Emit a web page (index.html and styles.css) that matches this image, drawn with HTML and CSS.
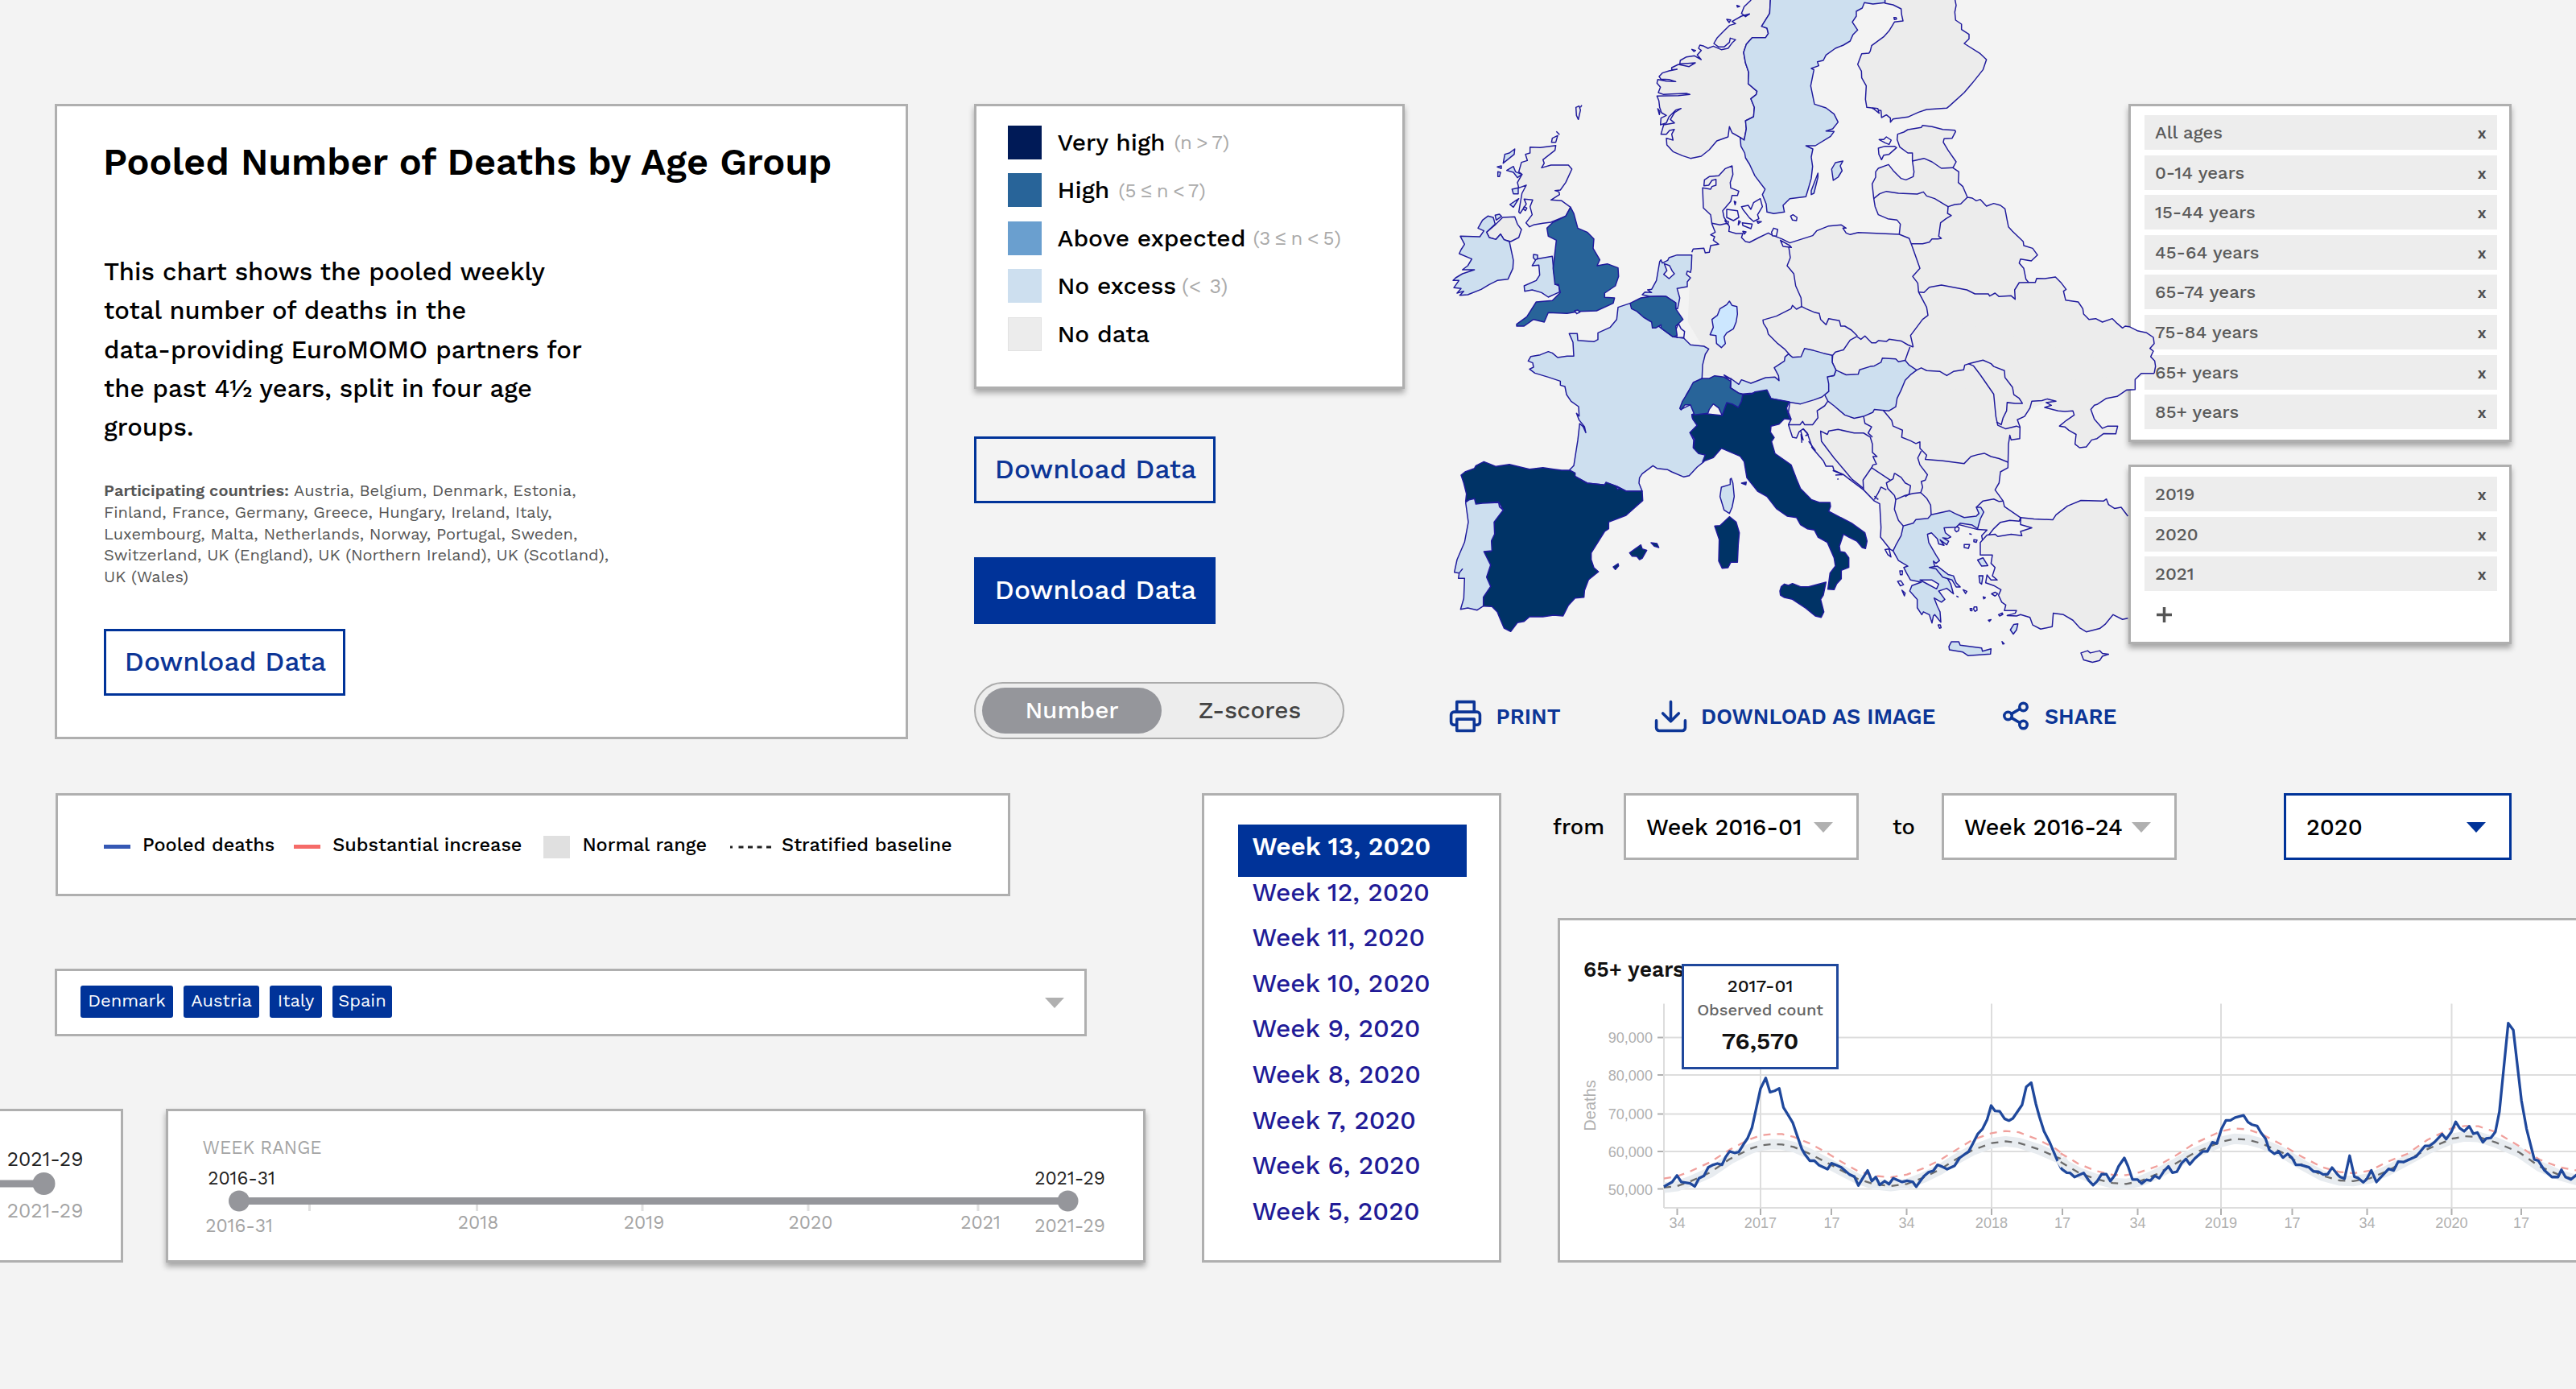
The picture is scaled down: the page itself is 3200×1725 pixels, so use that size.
FILE: index.html
```html
<!DOCTYPE html>
<html lang="en">
<head>
<meta charset="utf-8">
<title>EuroMOMO components</title>
<link rel="stylesheet" href="styles.css">
</head>
<body>
<main class="board">
  <div class="row row-top">
    <section class="card intro">
      <h1>Pooled Number of Deaths by Age Group</h1>
      <p class="lead">This chart shows the pooled weekly<br>total number of deaths in the<br>data-providing EuroMOMO partners for<br>the past 4½ years, split in four age<br>groups.</p>
      <p class="countries"><b>Participating countries:</b> Austria, Belgium, Denmark, Estonia,<br>Finland, France, Germany, Greece, Hungary, Ireland, Italy,<br>Luxembourg, Malta, Netherlands, Norway, Portugal, Sweden,<br>Switzerland, UK (England), UK (Northern Ireland), UK (Scotland),<br>UK (Wales)</p>
      <button class="btn">Download Data</button>
    </section>

    <section class="controls">
      <ul class="card raised levels">
        <li><i class="sw very-high"></i>Very high<small>(n &gt; 7)</small></li>
        <li><i class="sw high"></i>High<small>(5 ≤ n &lt; 7)</small></li>
        <li><i class="sw above"></i>Above expected<small class="tight">(3 ≤ n &lt; 5)</small></li>
        <li><i class="sw none"></i>No excess<small class="wide">(&lt; 3)</small></li>
        <li><i class="sw nodata"></i>No data</li>
      </ul>
      <button class="btn btn-a">Download Data</button>
      <button class="btn btn-b filled">Download Data</button>
      <div class="toggle"><span class="on">Number</span><span>Z-scores</span></div>
    </section>

    <section class="map-col">
      <svg class="map" viewBox="0 0 3000 2550" width="1000" height="850">
        <!-- inland filler -->
        <path class="nostroke" d="M965 945L1180 905 1300 900 1330 912 1740 876 2000 745 2100 850 2220 1060 2690 1370 2580 1440 2400 1450 2140 1560 2100 1700 2000 1850 1700 1900 1450 1600 1325 1550 1330 1500 1080 1405 1005 1400 1010 1300 950 1200 960 1000Z"/>
        <!-- Norway, Finland, Sweden -->
        <path d="M1186 0L1160 25 1150 50 1165 62 1180 52 1150 60 1115 80 1128 88 1105 95 1085 115 1060 140 1047 162 1065 175 1085 175 1105 158 1108 142 1128 148 1115 160 1100 180 1075 185 1045 172 1025 180 1010 172 995 168 990 180 1000 188 985 205 1000 222 975 208 945 212 922 225 920 238 950 236 978 234 955 248 915 240 890 252 890 260 910 258 880 264 855 272 843 285 850 295 880 296 905 304 870 302 838 296 835 310 848 325 840 345 860 352 890 350 945 348 958 352 915 356 870 357 835 358 842 375 845 400 852 420 870 430 850 440 848 465 870 458 880 435 905 410 925 404 900 420 885 445 900 458 860 465 850 500 870 500 882 486 900 482 890 500 895 522 870 515 872 540 895 565 930 580 960 590 1000 582 1030 558 1058 525 1100 510 1105 472 1115 495 1145 512 1160 522 1168 480 1165 450 1195 435 1198 400 1185 368 1205 352 1208 340 1175 312 1177 270 1165 235 1158 195 1168 165 1190 140 1240 140 1250 125 1245 105 1225 98 1255 50 1258 0"/>
        <path class="low" d="M1258 -5L1255 50 1225 98 1245 105 1250 125 1240 140 1190 140 1168 165 1158 195 1165 235 1177 270 1175 312 1208 340 1205 352 1185 368 1198 400 1195 435 1165 450 1168 480 1160 522 1145 512 1148 545 1162 570 1165 588 1180 612 1200 655 1238 705 1228 725 1242 760 1245 790 1270 796 1310 790 1305 765 1330 740 1390 733 1400 700 1410 665 1415 620 1410 585 1416 555 1390 543 1425 543 1482 508 1495 490 1465 488 1490 480 1510 455 1495 425 1465 402 1422 388 1408 320 1420 260 1410 255 1438 245 1433 230 1455 225 1465 205 1500 180 1530 168 1555 153 1565 130 1583 112 1563 82 1578 60 1578 42 1600 30 1608 10 1640 15 1685 10 1685 -5Z"/>
        <g transform="translate(1260 0)">
          <path d="M425 -5V12L455 18 485 33 487 55 492 78 460 82 440 115 420 137 375 170 370 190 365 198 338 200 323 240 337 265 338 290 355 320 352 370 357 400 375 402 395 410 410 412 412 438 430 428 445 440 445 455 455 443 510 436 550 418 580 408 655 403 665 395 720 345 750 310 790 260 803 222 780 200 720 162 738 145 738 128 710 110 710 90 688 75 685 45 690 20 685 -5"/>
          <path class="low" d="M232 672L226 630 240 606 268 600 258 618 265 636 250 660 238 668ZM175 645L150 710 150 725 160 720 175 660Z"/>
          <path class="water" d="M73 805L82 800 97 810 95 822 80 820ZM403 520L420 520 430 510 448 522 440 538 425 532ZM400 552L425 545 460 545 468 550 440 575 420 578 412 595 402 575ZM378 402l25 20-5-18zM458 65l8 0 2 6-8 2z"/>
        </g>
        <!-- northern mainland -->
        <path d="M965 940L970 928 1010 925 1015 942 1030 940 1035 915 1065 910 1045 895 1050 882 1035 875 1052 865 1040 835 1035 800 1008 775 1005 700 1035 705 1040 695 1055 690 1055 668 1040 672 1028 690 1010 692 1012 670 1030 658 1065 655 1090 628 1115 618 1118 650 1108 680 1110 700 1140 712 1135 728 1115 728 1110 750 1080 785 1085 810 1098 830 1105 845 1103 862 1130 870 1155 870 1150 885 1165 900 1180 903 1215 885 1250 868 1262 875 1300 890 1330 905 1415 878 1430 860 1475 842 1522 838 1540 850 1528 850 1540 868 1555 874 1585 866 1738 873 1742 835 1730 820 1695 815 1660 800 1648 770 1643 740 1637 685 1650 660 1650 640 1660 627 1698 613 1715 635 1745 665 1763 670 1790 658 1793 640 1787 600 1787 570 1770 570 1740 548 1730 520 1732 500 1755 492 1770 483 1820 475 1825 467 1860 472 1900 482 1945 485 1948 490 1935 515 1905 517 1902 530 1920 560 1950 603 1938 625 1960 640 1958 680 1975 695 1992 735 2010 738 2025 748 2040 743 2063 768 2090 758 2115 765 2132 778 2140 820 2145 845 2160 862 2200 900 2202 915 2235 925 2253 950 2230 972 2190 965 2185 980 2202 1000 2210 1040 2220 1052 2245 1052 2250 1037 2280 1038 2320 1032 2340 1052 2360 1078 2350 1085 2358 1118 2405 1125 2422 1150 2425 1170 2445 1190 2470 1187 2495 1200 2532 1187 2550 1205 2570 1222 2580 1215 2595 1217 2625 1232 2660 1240 2685 1257 2688 1280 2672 1298 2685 1308 2675 1329 2690 1345 2693 1365 2688 1391"/>
        <!-- southern mainland, Turkey, Cyprus -->
        <g transform="translate(1260 1200) scale(1 1.0332)">
          <path d="M1428 185L1380 185 1357 207 1357 243 1325 245 1290 268 1250 275 1215 297 1205 300 1192 315 1205 350 1235 383 1255 375 1292 375 1285 403 1240 402 1215 420 1195 425 1175 450 1150 453 1133 440 1137 405 1110 390 1095 378 1075 375 1100 355 1130 335 1125 320 1095 322 1070 320 1020 308 1045 300 1025 290 1062 285 1030 277 1010 283 972 285 965 310 945 340 918 352 928 378 927 420 895 425 890 408 885 440 883 525 855 540 850 580 835 605 865 645 870 665 930 705 925 718 890 715 855 722 830 745 790 795 785 770 805 750 770 748 640 715 500 750 455 825 445 820 408 775 410 740 405 655 385 645 345 605 290 565 270 550 235 535 230 520 205 520 195 500 155 455 135 400 120 385 105 395 95 418 80 415 65 370 75 350 65 325 70 290"/>
          <path d="M1330 700L1305 668 1280 672 1258 658 1250 638 1240 645 1155 643 1105 663 1062 695 1050 713 980 710 930 705 930 730 972 742 930 755 935 770 895 765 845 773 835 765 805 768 780 795 780 840 825 840 820 870 835 885 825 915 843 930 820 930 805 912 800 940 830 950 857 965 848 985 860 1010 875 1020 870 1040 915 1040 910 1050 880 1058 915 1060 930 1055 965 1065 975 1092 1005 1107 1048 1098 1052 1050 1090 1055 1125 1075 1150 1102 1175 1117 1225 1105 1245 1090 1275 1055 1310 1072 1330 1068"/>
          <path d="M1155 1193L1180 1185 1190 1193 1225 1185 1235 1195 1258 1198 1235 1205 1225 1220 1198 1227 1165 1218Z"/>
          <g class="line">
            <path d="M320 52L335 62 350 50 375 75 390 75 400 67 430 70 440 62 485 68 510 82 530 90"/>
            <path d="M320 52L295 65 270 100 240 108 230 120 228 145 242 173"/>
            <path d="M518 90L510 110 500 138"/>
            <path d="M543 173L560 165 580 175 630 178 655 193 680 178 718 172 722 155 745 148 790 137 820 150 830 160 870 175 872 200 880 210 900 235 905 262 925 275 937 293 910 293 880 290 878 320 865 345 858 370 840 360"/>
            <path d="M735 150L755 158 780 190 830 260 838 340 845 372 875 385 915 375 928 380"/>
            <path d="M418 318L450 355 455 375 490 390 487 415 520 428 540 438 555 432 555 455 580 480 575 495 640 500 720 510 745 485 770 478 795 473 820 485 850 492 883 505"/>
            <path d="M560 465L547 490 555 515 583 550 575 570 560 575 565 595 558 615"/>
            <path d="M558 615L580 635 595 660 597 697"/>
            <path d="M558 615L530 618 500 625 465 640 460 675 475 715 493 735"/>
            <path d="M460 545L485 560 500 580 520 590 515 620 500 630M460 545L455 565 430 580 435 600 460 625 465 640"/>
            <path d="M385 640L400 615 410 595 430 605M345 605L343 570 375 525 445 570"/>
            <path d="M375 525L380 515 393 512 380 485 395 485 378 470 378 440 370 415 345 400 310 400 250 387 215 393 210 405 185 393 188 430 235 490 270 530 300 565 345 600"/>
            <path d="M345 340L350 365 375 378 362 400 378 415"/>
            <path d="M212 285L200 302 172 320 175 345 155 370 125 370 118 358 108 370 65 370"/>
            <path d="M765 668L790 645 830 638 850 647 865 645"/>
            <path d="M110 390L120 425 112 405 115 435M120 385L138 405 128 410M140 430L165 462 150 450M230 535L268 550 240 552M247 567L252 565M385 628l15 12M930 703v15"/>
          </g>
          <path class="low" d="M242 173L280 190 325 188 330 172 370 160 385 158 410 145 415 130 465 133 475 143 500 138 515 155 543 173 520 190 500 210 485 245 470 275 465 305 440 320 415 318 385 315 380 325 345 340 310 347 275 335 235 302 212 285 200 262 215 250 210 225 210 197 235 193Z"/>
          <path class="low" d="M455 825L465 805 485 770 493 735 530 725 540 712 585 708 597 695 665 680 685 690 720 705 765 700 775 690 765 668 782 668 793 685 780 710 770 745 750 732 705 725 690 740 645 742 650 760 670 775 660 780 640 778 662 790 655 803 630 785 645 805 625 800 620 782 598 760 583 765 588 795 615 840 628 860 615 870 605 862 610 880 655 920 670 945 680 980 655 960 640 965 625 970 648 1000 635 1010 608 995 620 1025 630 1045 633 1082 610 1055 605 1060 600 1085 590 1055 568 1045 562 1055 545 1030 545 1000 517 970 525 950 560 938 520 930 505 905 495 885 510 880 475 860Z"/>
          <path class="low" d="M590 885L620 880 660 910 680 915 690 940 705 955 690 955 675 930 640 920 615 890ZM663 1170L672 1153 700 1153 705 1165 785 1175 788 1187 820 1178 818 1197 735 1203 715 1190 665 1182ZM892 1110L905 1090 920 1088 915 1110 903 1125ZM770 858L790 850 808 878 785 880ZM775 915L790 915 785 945 778 940Z"/>
          <path class="water" d="M555 930L600 930 625 945 617 962 580 943ZM686 741l8-3 7 5-2 9-8 4-6-6zM720 802l20 0-4 14-16-3zM756 785l12 1-3 8-9-2zM739 763l9 3M822 980L835 974 845 980 835 988ZM791 991l8 3-6 4zM716 965l14 6-5 8zM691 988l8 4M742 1033l7 0 0 8-6-1zM757 1027l10 0 1 12-8 4-5-8zM810 1075l10-2-6 6zM848 1055l14-6 2 5-12 6zM861 1152l8 8-5 1zM623 1092l8 0 3 10-6 2zM480 897l10 0-1 14-7 0zM472 935l12-2 10 14-12 4zM488 967l12 10-3 10zM425 820L440 818 447 847 435 838Z"/>
        </g>
        <g class="line">
          <path d="M1040 832L1070 838 1098 832"/>
          <path d="M1325 912L1332 960 1320 990 1345 1020 1352 1065 1372 1110 1374 1145"/>
          <path d="M1374 1142L1355 1152 1340 1138 1335 1150 1280 1178 1230 1192 1232 1205 1245 1225 1250 1245 1285 1280 1310 1300 1330 1322"/>
          <path d="M1374 1142L1390 1150 1420 1163 1440 1168 1445 1190 1465 1210 1475 1187 1515 1195 1520 1215 1535 1215 1560 1230 1582 1252"/>
          <path d="M1787 600L1830 590 1860 603 1895 627 1938 625"/>
          <path d="M1643 740L1665 722 1690 713 1735 720 1805 723 1828 715 1840 730 1870 740 1920 770 1945 762 1967 760 1992 735"/>
          <path d="M1920 770L1918 795 1932 803 1912 815 1892 830 1885 880 1895 888 1882 890 1860 890 1850 902 1825 908 1783 908"/>
          <path d="M1738 873L1775 888 1785 915 1815 1000 1788 1030 1807 1055 1810 1088 1840 1145 1845 1175 1825 1190 1780 1250 1790 1293"/>
          <path d="M1810 1088L1830 1090 1850 1070 1895 1062 1990 1080 2020 1095 2070 1095 2075 1103 2095 1092 2110 1105 2155 1102 2170 1115 2168 1080 2185 1053 2220 1052"/>
        </g>
        <path class="water" d="M1262 865L1270 850 1285 855 1280 880 1265 878ZM1095 780L1135 785 1140 810 1120 822 1095 810ZM1150 770L1175 765 1185 780 1195 755 1220 740 1228 770 1210 800 1215 815 1195 825 1180 812 1155 780ZM1153 830L1190 835 1185 852 1155 840ZM1088 822l14 4-4 10zM1123 750l6 3-3 10zM1140 822l6 4-8 12zM1208 824l16 2-12 6zM1295 895L1330 915 1336 922 1305 918ZM1155 862l12 2-6 8zM1095 72l15 2-6 10zM1133 20l10 4-8 2zM965 184l14 4-6 4zM838 405l8 10-2 12z"/>
        <!-- Low Countries, Hesse -->
        <path class="low" d="M965 950L963 1000 960 1015 948 1010 945 1022 960 1035 948 1050 948 1068 910 1075 920 1110 912 1150 905 1150 905 1128 870 1105 850 1103 810 1105 780 1098 790 1088 815 1090 800 1080 815 1078 833 1045 845 975 850 968 855 980 875 970 880 960 910 950Z"/>
        <path class="water" d="M862 982L882 990 892 1010 900 1020 880 1038 860 1022 872 1008ZM780 1110L815 1108 808 1117 785 1115Z"/>
        <path class="hesse" d="M1105 1122L1115 1138 1133 1142 1135 1170 1130 1200 1120 1225 1095 1240 1085 1255 1090 1280 1075 1295 1057 1280 1055 1250 1033 1247 1045 1220 1040 1190 1060 1175 1070 1150 1095 1135Z"/>
        <!-- France -->
        <path class="low" d="M735 1130L690 1145 685 1190 660 1220 615 1240 615 1265 600 1273 540 1268 538 1243 508 1243 522 1275 525 1327 500 1327 465 1332 445 1315 430 1310 400 1322 365 1328 355 1345 372 1352 375 1368 360 1375 380 1390 430 1405 475 1420 475 1435 492 1440 498 1470 515 1495 543 1515 545 1550 535 1540 545 1565 565 1590 570 1612 560 1590 547 1578 540 1640 525 1735 510 1750 530 1775 575 1800 640 1807 645 1798 685 1812 720 1830 780 1830 768 1800 770 1780 780 1765 820 1735 835 1745 875 1750 890 1758 935 1777 955 1772 985 1740 1010 1720 1015 1695 970 1668 972 1640 958 1612 985 1585 968 1560 965 1545 975 1540 960 1508 925 1525 945 1470 970 1430 1003 1410 1005 1360 1015 1320 1028 1300 1010 1290 960 1285 935 1260 895 1255 850 1222Z"/>
        <path class="low" d="M1112 1782L1118 1800 1123 1850 1115 1890 1105 1913 1085 1900 1070 1850 1075 1815 1108 1805 1108 1785Z"/>
        <path class="water" d="M915 1205L925 1225 938 1235 935 1258 910 1258 905 1230Z"/>
        <path class="mid" d="M735 1130L775 1110 810 1105 850 1103 870 1105 905 1128 905 1150 915 1165 932 1190 905 1215 910 1250 895 1255 850 1222 850 1210 830 1222 818 1222 815 1200 785 1182 760 1160 740 1150Z"/>
        <!-- Austria, Italy, Switzerland -->
        <path class="low" d="M1110 1410L1140 1432 1150 1415 1185 1428 1240 1407 1275 1405 1290 1418 1288 1400 1272 1370 1310 1345 1312 1330 1325 1319 1340 1331 1372 1329 1385 1298 1420 1306 1455 1316 1488 1324 1488 1350 1502 1379 1495 1399 1470 1404 1475 1430 1475 1458 1450 1479 1420 1490 1370 1505 1320 1497 1260 1485 1245 1455 1190 1465 1155 1468 1140 1465 1110 1445Z"/>
        <path class="peak" d="M1155 1470L1190 1468 1200 1460 1245 1453 1260 1485 1328 1497 1318 1520 1325 1545 1332 1563 1310 1560 1290 1580 1260 1588 1258 1610 1272 1630 1262 1645 1275 1690 1335 1732 1355 1784 1370 1820 1410 1861 1440 1872 1480 1872 1482 1887 1475 1905 1560 1949 1610 1985 1618 2016 1612 2044 1600 2040 1580 2016 1550 2001 1530 1990 1515 2035 1518 2055 1535 2058 1550 2078 1550 2114 1522 2125 1522 2156 1505 2175 1495 2197 1472 2195 1480 2135 1500 2109 1495 2078 1470 2021 1435 2001 1422 1975 1395 1970 1370 1955 1355 1928 1320 1923 1280 1895 1245 1850 1210 1830 1170 1780 1160 1720 1145 1700 1075 1670 1045 1705 1005 1720 1015 1695 990 1690 972 1670 975 1635 958 1612 985 1585 968 1560 965 1545 1000 1540 1078 1548 1095 1500Z"/>
        <path class="mid" d="M1003 1410L1030 1410 1050 1400 1085 1405 1110 1420 1108 1445 1140 1465 1155 1470 1150 1495 1138 1518 1115 1505 1095 1500 1078 1548 1065 1520 1045 1505 1030 1525 1025 1540 975 1546 960 1508 940 1508 925 1527 920 1522 930 1495 950 1463 970 1425Z"/>
        <path class="water" d="M1085 1397l25 14-14-2z"/>
        <path class="peak" d="M1293 2202L1298 2186 1310 2176 1325 2181 1340 2174 1370 2186 1400 2186 1465 2169 1455 2217 1445 2233 1457 2280 1447 2300 1425 2295 1390 2266 1340 2233 1310 2226 1295 2217ZM1050 1960L1070 1958 1105 1925 1130 1945 1142 1985 1138 2030 1135 2095 1110 2095 1100 2115 1078 2117 1065 2090 1067 2010ZM1150 1800L1168 1796 1166 1806ZM733 2060L775 2030 780 2045 797 2050 780 2080 770 2085 760 2073 742 2072ZM813 2022L835 2025 842 2040 825 2035ZM672 2112L690 2100 692 2108 680 2122Z"/>
        <!-- Spain, Portugal -->
        <path class="peak" d="M105 1770L120 1758 155 1745 160 1735 190 1720 215 1730 235 1738 285 1730 360 1748 410 1742 450 1748 480 1752 510 1752 530 1762 530 1775 575 1800 640 1807 645 1797 685 1812 720 1830 780 1830 782 1865 720 1920 655 1945 655 1970 640 1980 590 2060 590 2085 600 2115 617 2130 580 2160 565 2200 563 2225 530 2228 505 2255 485 2295 450 2292 410 2298 360 2298 340 2315 315 2320 290 2353 265 2340 250 2305 240 2280 220 2260 188 2258 188 2225 215 2185 200 2150 215 2105 190 2055 215 2055 220 2000 230 1990 228 1945 262 1900 245 1870 160 1878 155 1858 122 1868 125 1840 115 1800Z"/>
        <path class="water" d="M684 1815l12 3-8 6z"/>
        <path class="low" d="M155 1858L160 1878 185 1875 245 1872 248 1888 262 1900 228 1945 230 1990 218 2015 220 2052 190 2055 215 2105 200 2150 215 2185 188 2225 188 2258 165 2273 130 2265 103 2270 115 2230 118 2155 95 2155 98 2135 110 2120 98 2135 80 2132 90 2085 118 2020 132 1945 122 1872 135 1862Z"/>
        <!-- British Isles -->
        <path d="M458 542L455 560 410 595 415 608 405 625 440 615 505 615 518 630 495 680 475 708 455 710 470 715 472 725 440 745 480 748 513 772 495 805 440 828 410 832 375 838 360 845 347 830 370 800 362 770 372 745 340 742 348 760 325 795 320 790 332 720 348 690 320 700 315 680 332 650 320 640 330 605 352 598 345 575 362 570 362 548 400 550Z"/>
        <path d="M305 808L315 835 330 855 320 885 290 900 265 893 252 872 235 892 210 885 200 865 235 835 260 810Z"/>
        <path class="low" d="M285 900L300 970 298 1000 280 1040 240 1045 210 1060 180 1078 130 1098 100 1100 115 1085 90 1092 105 1075 78 1072 97 1045 75 1045 85 1035 110 1020 155 1005 110 1005 130 990 145 965 98 945 105 930 118 910 102 880 175 882 190 860 168 850 185 820 205 805 225 810 232 835 200 865 210 885 235 892 252 872 265 893Z"/>
        <path class="low" d="M445 955L450 1010 458 1060 470 1065 472 1088 430 1107 405 1090 370 1080 342 1085 340 1065 385 1045 398 1025 395 988 370 990 385 965Z"/>
        <path class="mid" d="M513 772L525 795 540 850 575 865 600 890 597 925 622 968 612 990 650 983 690 998 692 1030 680 1065 640 1092 640 1108 677 1110 672 1130 610 1158 545 1160 500 1168 430 1165 415 1200 375 1190 340 1215 312 1215 312 1208 350 1180 385 1125 445 1120 475 1090 468 1060 455 1060 448 1000 460 895 430 880 425 850 445 830 495 805Z"/>
        <path class="low" d="M275 635L300 620 308 640 332 650 315 662 300 642ZM305 555L303 575 262 608 268 575 285 570ZM240 622L255 618 255 628ZM242 640L252 642 248 658 242 658ZM295 705L318 700 318 722 300 722ZM287 762L320 740 300 772ZM375 948l15 2 0 14-8 4-8-8zM528 1158l12-3 8 8-12 6zM232 802l16-4 8 8-20 14z"/>
        <path d="M340 770L350 775 345 785 338 780ZM445 515L465 505 458 530 442 530ZM460 490l12 12M533 400L545 395 550 410 542 445 535 430ZM550 400l5-8"/>
      </svg>
      <nav class="actions">
        <a class="act print"><svg viewBox="0 0 24 24" width="43" height="43"><path d="M6 9V2h12v7M6 18H4a2 2 0 0 1-2-2v-5a2 2 0 0 1 2-2h16a2 2 0 0 1 2 2v5a2 2 0 0 1-2 2h-2M6 14h12v8H6z"/></svg>PRINT</a>
        <a class="act download"><svg viewBox="0 0 24 24" width="43" height="43"><path d="M2 15v5a2 2 0 0 0 2 2h16a2 2 0 0 0 2-2v-5M12 2v13.500M6.500 10L12 15.500 17.500 10"/></svg>DOWNLOAD AS IMAGE</a>
        <a class="act share"><svg viewBox="0 0 24 24" width="38" height="38"><path d="M8.600 13.500l6.800 4M15.400 6.500l-6.800 4"/><circle cx="18" cy="5" r="3"/><circle cx="6" cy="12" r="3"/><circle cx="18" cy="19" r="3"/></svg>SHARE</a>
      </nav>
    </section>

    <section class="filters">
      <ul class="card raised chips ages">
        <li>All ages<b>x</b></li><li>0-14 years<b>x</b></li><li>15-44 years<b>x</b></li><li>45-64 years<b>x</b></li>
        <li>65-74 years<b>x</b></li><li>75-84 years<b>x</b></li><li>65+ years<b>x</b></li><li>85+ years<b>x</b></li>
      </ul>
      <ul class="card raised chips years">
        <li>2019<b>x</b></li><li>2020<b>x</b></li><li>2021<b>x</b></li>
        <li class="add"><svg viewBox="0 0 19 19" width="19" height="19"><path d="M9.500 0v19M0 9.500h19"/></svg></li>
      </ul>
    </section>
  </div>

  <div class="row row-bottom">
    <section class="left">
      <ul class="card legend">
        <li><i class="ln blue"></i>Pooled deaths</li>
        <li><i class="ln red"></i>Substantial increase</li>
        <li><i class="box"></i>Normal range</li>
        <li><svg width="53" height="4" viewBox="0 0 53 4"><path d="M0 2h3M10.500 2h6M22 2h6M33.500 2h6M45 2h6"/></svg>Stratified baseline</li>
      </ul>
      <div class="card tags"><span class="dk">Denmark</span><span class="at">Austria</span><span class="it">Italy</span><span class="es">Spain</span><i class="caret"></i></div>
      <div class="sliders">
        <div class="card cut">
          <svg viewBox="0 1380 150 185" width="150" height="185" class="slider big">
            <path class="track" d="M0 1470H55"/><circle cx="54.500" cy="1470" r="14"/>
            <text class="now" x="56" y="1447.500">2021-29</text><text x="56" y="1512">2021-29</text>
          </svg>
        </div>
        <div class="card raised range">
          <svg viewBox="209 1380 1211 185" width="1211" height="185" class="slider">
            <path class="tick" d="M384.500 1492v12M592.500 1492v12M798 1492v12M1004 1492v12M1215 1492v12"/>
            <path class="track" d="M297 1491.500H1326"/><circle cx="297" cy="1491.500" r="13"/><circle cx="1326.500" cy="1491.500" r="13"/>
            <text class="head" x="251.500" y="1433">WEEK RANGE</text>
            <text class="now" x="300" y="1470.500">2016-31</text><text class="now" x="1329" y="1470.500">2021-29</text>
            <text x="297" y="1530">2016-31</text><text x="1329" y="1530">2021-29</text>
            <text x="594" y="1525.500">2018</text><text x="800" y="1525.500">2019</text><text x="1007" y="1525.500">2020</text><text x="1218" y="1525.500">2021</text>
          </svg>
        </div>
      </div>
    </section>

    <ul class="card weeks">
      <li class="sel">Week 13, 2020</li><li>Week 12, 2020</li><li>Week 11, 2020</li><li>Week 10, 2020</li><li>Week 9, 2020</li><li>Week 8, 2020</li><li>Week 7, 2020</li><li>Week 6, 2020</li><li>Week 5, 2020</li>
    </ul>

    <section class="right">
      <div class="dates">
        <span class="from">from</span><div class="card select">Week 2016-01<i class="caret"></i></div>
        <span class="to">to</span><div class="card select">Week 2016-24<i class="caret"></i></div>
        <div class="card select year">2020<i class="caret"></i></div>
      </div>
      <div class="card chart">
        <h2>65+ years</h2>
        <svg viewBox="1938 1219 1262 346" width="1262" height="346">
          <path class="grid" d="M2067 1288.500H3200M2067 1335H3200M2067 1383.500H3200M2067 1430H3200M2067 1476.500H3200M2067 1500H3200M2067 1246.500V1500M2187 1246.500V1500M2474 1246.500V1500M2759 1246.500V1500M3045.500 1246.500V1500"/>
          <path class="mark" d="M2059 1288.500h7M2059 1335h7M2059 1383.500h7M2059 1430h7M2059 1476.500h7M2083.500 1501v8M2187 1501v8M2275 1501v8M2368.500 1501v8M2474 1501v8M2562 1501v8M2655.500 1501v8M2759 1501v8M2847.500 1501v8M2940.500 1501v8M3045.500 1501v8M3132 1501v8"/>
          <g class="axis end"><text x="2053" y="1295">90,000</text><text x="2053" y="1341.500">80,000</text><text x="2053" y="1390">70,000</text><text x="2053" y="1437">60,000</text><text x="2053" y="1483.500">50,000</text></g>
          <g class="axis"><text x="2083.500" y="1525">34</text><text x="2187" y="1525">2017</text><text x="2275.500" y="1525">17</text><text x="2368.500" y="1525">34</text><text x="2474" y="1525">2018</text><text x="2562" y="1525">17</text><text x="2655.500" y="1525">34</text><text x="2759" y="1525">2019</text><text x="2847.500" y="1525">17</text><text x="2940.500" y="1525">34</text><text x="3045.500" y="1525">2020</text><text x="3132" y="1525">17</text>
          <text class="ylab" transform="translate(1981.500 1373) rotate(-90)">Deaths</text></g>
          <g class="plot" transform="translate(1920 970) scale(.40816 .38903)">
            <path class="band" d="M360 1298L400 1293 440 1278 500 1250 560 1207 620 1175 655 1163 690 1159 720 1160 755 1168 800 1188 850 1215 900 1243 950 1270 1000 1287 1050 1293 1100 1286 1150 1266 1200 1240 1250 1207 1300 1178 1357 1156 1400 1150 1440 1155 1500 1175 1550 1198 1568 1206"/>
            <path class="base" d="M360 1298L400 1293 440 1278 500 1250 560 1207 620 1175 655 1163 690 1159 720 1160 755 1168 800 1188 850 1215 900 1243 950 1270 1000 1287 1050 1293 1100 1286 1150 1266 1200 1240 1250 1207 1300 1178 1357 1156 1400 1150 1440 1155 1500 1175 1550 1198 1568 1206"/>
            <path class="upper" d="M360 1269L400 1262 440 1246 500 1217 560 1177 620 1144 655 1131 690 1127 720 1127 755 1136 800 1155 850 1183 900 1215 950 1245 1000 1260 1050 1265 1100 1256 1150 1236 1200 1210 1250 1177 1300 1145 1357 1124 1400 1117 1440 1121 1500 1145 1550 1172 1568 1186"/>
            <path class="obs" d="M360 1295L385 1280 400 1259 413 1280 440 1284 454 1294 467 1268 482 1260 495 1233 510 1225 523 1221 537 1225 548 1200 560 1182 575 1187 588 1184 602 1160 615 1140 628 1107 640 1050 654 982 670 948 683 993 697 989 711 981 724 1042 738 1066 752 1090 765 1130 780 1175 790 1193 804 1212 818 1212 832 1226 858 1239 870 1220 885 1226 900 1233 925 1256 940 1263 952 1291 965 1268 980 1243 993 1277 1005 1264 1017 1289 1032 1277 1045 1287 1058 1268 1085 1280 1100 1276 1118 1280 1128 1295 1150 1263 1165 1249 1180 1244 1193 1225 1207 1231 1222 1239 1245 1228 1260 1203 1288 1182 1300 1158 1315 1127 1330 1110 1344 1080 1356 1036 1368 1053 1382 1054 1397 1078 1410 1084 1422 1077 1450 1034 1463 976 1478 963 1492 1030 1503 1072 1517 1118 1535 1155 1555 1205 1568 1234"/>
          </g>
          <g class="plot" transform="translate(2540 970) scale(.42092 .38903)">
            <path class="band" d="M47 1206L60 1226 100 1250 150 1270 200 1283 240 1286 280 1278 330 1255 380 1225 440 1188 520 1152 560 1142 600 1145 640 1157 700 1185 760 1225 820 1260 870 1275 910 1277 960 1268 1010 1245 1070 1210 1130 1175 1201 1142 1240 1134 1280 1136 1330 1153 1400 1185 1460 1230 1520 1258 1575 1275"/>
            <path class="base" d="M47 1216L100 1250 150 1270 200 1283 240 1286 280 1278 330 1255 380 1225 440 1188 520 1152 560 1142 600 1145 640 1157 700 1185 760 1225 820 1260 870 1275 910 1277 960 1268 1010 1245 1070 1210 1130 1175 1201 1142 1240 1134 1280 1136 1330 1153 1400 1185 1460 1230 1520 1258 1575 1275"/>
            <path class="upper" d="M47 1188L100 1222 150 1244 200 1257 240 1258 280 1249 330 1230 380 1200 440 1158 520 1118 560 1109 600 1112 640 1127 700 1161 760 1200 820 1233 870 1248 910 1252 960 1244 1010 1216 1070 1190 1130 1145 1201 1108 1240 1101 1280 1102 1330 1120 1400 1165 1460 1208 1520 1233 1575 1244"/>
            <path class="obs" d="M47 1234L52 1240 65 1250 75 1251 88 1264 115 1251 130 1275 143 1290 155 1277 168 1255 182 1255 194 1277 207 1258 218 1230 235 1203 246 1230 259 1272 274 1272 286 1285 300 1273 312 1275 325 1260 338 1268 352 1245 365 1230 377 1250 390 1247 404 1220 417 1206 428 1224 443 1205 467 1182 480 1182 495 1153 508 1157 522 1110 535 1083 548 1083 562 1074 587 1067 600 1089 612 1097 627 1101 638 1122 652 1142 663 1178 678 1190 690 1182 703 1202 717 1190 730 1203 741 1225 755 1225 780 1233 793 1246 808 1247 822 1256 835 1255 848 1234 865 1257 872 1264 885 1269 900 1196 914 1263 925 1267 940 1281 950 1271 964 1243 979 1280 1015 1238 1030 1243 1043 1215 1060 1216 1097 1198 1122 1165 1135 1165 1150 1153 1173 1127 1185 1143 1200 1120 1213 1088 1225 1108 1238 1118 1253 1102 1265 1126 1277 1122 1293 1153 1303 1141 1317 1139 1330 1120 1342 1055 1368 773 1383 795 1407 1020 1422 1110 1445 1208 1457 1212 1475 1243 1497 1264 1515 1264 1525 1241 1537 1264 1553 1272 1575 1252"/>
          </g>
        </svg>
        <div class="tip"><span class="wk">2017-01</span><span class="what">Observed count</span><strong>76,570</strong></div>
      </div>
    </section>
  </div>
</main>
</body>
</html>
```
FILE: styles.css
```css
* { box-sizing: border-box; }
body { margin: 0; background: #f3f3f3; color: #000; font-family: "Work Sans", Inter, sans-serif; font-weight: 500; }
ul, p, h1, h2 { margin: 0; padding: 0; list-style: none; }
.board { width: 3200px; height: 1725px; overflow: hidden; padding-top: 129px; }
.row { display: flex; }
.row-top { height: 789px; padding-left: 68px; }
.row-bottom { margin-top: 67px; height: 583px; }
.card { background: #fff; border: 3px solid #afafaf; }
.raised { box-shadow: 0 5px 7px rgba(0, 0, 0, .32); }

.intro { width: 1060px; height: 789px; padding: 43px 0 0 58px; }
.intro h1 { margin-left: -1px; font-weight: 600; font-size: 46.7px; line-height: 52px; white-space: nowrap; }
.lead { margin-top: 87px; font-size: 31.05px; line-height: 48.3px; white-space: nowrap; }
.countries { margin-top: 41px; font-weight: 400; font-size: 20.05px; line-height: 26.6px; color: #555; white-space: nowrap; }
.countries b { font-weight: 600; }
.btn { display: flex; align-items: center; justify-content: center; width: 300px; height: 83px; padding: 0 0 2px 2px; border: 3px solid #039; background: none; color: #0c3596; font: inherit; font-size: 33.5px; white-space: nowrap; }
.intro .btn { margin-top: 52px; }
.btn-a { margin-top: 59px; }
.btn-b { margin-top: 67px; }
.btn.filled { background: #039; color: #fff; }

.controls { width: 535px; margin-left: 82px; }
.levels { height: 354px; padding: 23.5px 0 0 39px; display: flex; flex-direction: column; gap: 17.5px; }
.levels li { display: flex; align-items: center; height: 42px; line-height: 34px; font-size: 29.9px; }
.sw { width: 42px; height: 42px; margin-right: 19.5px; }
.levels small { margin: 1px 0 0 11px; font-weight: 400; font-size: 24px; word-spacing: -2.8px; color: #aaa; }
.levels small.tight { margin-left: 9px; }
.levels small.wide { margin-left: 7px; font-size: 25px; word-spacing: 2px; }
.very-high { background: #001a57; }
.high { background: #286499; }
.above { background: #6a9fcf; }
.none { background: #cddfef; }
.nodata { background: #ececec; border: 1px solid #e2e2e2; }
.toggle { display: flex; align-items: center; width: 460px; height: 71px; margin-top: 72px; padding: 0 8px; border: 2px solid #aaa; border-radius: 36px; background: #ededed; font-size: 29.7px; color: #444; }
.toggle span { flex: none; width: 223px; height: 57px; line-height: 56px; text-align: center; }
.toggle span + span { padding-right: 4px; }
.toggle .on { background: #95969b; color: #fff; border-radius: 29px; }

.map-col { position: relative; width: 863px; margin-left: 35px; padding: 736px 0 0 19px; }
.map { position: absolute; left: 0; top: -129px; z-index: 1; pointer-events: none; fill: #ececec; stroke: #1f1a9c; stroke-width: 4.4; stroke-linejoin: round; }
.map .nostroke { stroke: none; }
.map .line { fill: none; }
.map .low { fill: #cddfef; }
.map .hesse { fill: #cce7ff; }
.map .mid { fill: #286499; }
.map .peak { fill: #036; }
.map .water { fill: #f3f3f3; }
.actions { display: flex; align-items: center; height: 48px; color: #0c3596; font-weight: 600; font-size: 26.6px; white-space: nowrap; }
.act { display: flex; align-items: center; gap: 16.5px; }
.act svg { fill: none; stroke: currentColor; stroke-width: 2; stroke-linecap: round; stroke-linejoin: round; }
.download { margin-left: 115px; }
.share { margin-left: 81px; }
.act.share svg { stroke-width: 2.2; }

.filters { width: 476px; margin-left: 1px; }
.chips { display: flex; flex-direction: column; gap: 6.6px; color: #5a5a5a; font-size: 22.1px; }
.chips li { display: flex; justify-content: space-between; align-items: center; height: 43px; flex: none; padding: 0 13.5px 1px 13px; background: #ededed; }
.chips b { font-weight: 600; font-size: 19px; padding-top: 3px; color: #4f4f4f; }
.ages { height: 419.5px; padding: 11px 15px 0 17px; }
.years { position: relative; z-index: 2; height: 223px; margin-top: 28.5px; padding: 12px 15px 0 17px; }
.chips .add { background: none; height: 44px; padding-left: 15px; }
.add svg { stroke: #555; stroke-width: 3.5; margin-top: 2px; }

.left { width: 1423px; }
.legend { display: flex; align-items: center; width: 1186px; height: 128px; margin-left: 69px; padding: 0 0 0 57px; font-size: 23.5px; white-space: nowrap; }
.legend li { display: flex; align-items: center; }
.ln { width: 33px; height: 5px; margin: 5px 15px 0 0; }
.blue { background: #3558b4; }
.red { background: #f56b68; }
.box { width: 33px; height: 28px; margin: 5px 15px 0 0; background: #e0e0e0; }
.legend li + li { margin-left: 24px; }
.legend li + li + li { margin-left: 27px; }
.legend li + li + li + li { margin-left: 28.5px; }
.legend svg { margin: 5px 11.5px 0 0; stroke: #222; stroke-width: 3; }
.tags { display: flex; align-items: center; width: 1282px; height: 84px; margin: 90px 0 0 68px; padding: 0 25.5px 3px 29px; color: #fff; font-weight: 400; font-size: 21.9px; }
.tags span { height: 40px; margin-right: 13px; line-height: 38px; text-align: center; background: #039; border-radius: 3px; }
.dk { width: 115px; }
.at { width: 94px; }
.it { width: 65px; }
.es { width: 74px; }
.caret { width: 0; height: 0; margin-left: auto; border: solid transparent; border-width: 13px 12.5px 0; border-top-color: #b0b0b0; }
.tags .caret { margin-top: 3px; }
.sliders { display: flex; gap: 53px; margin-top: 90px; }
.sliders .card { height: 191px; }
.sliders svg { display: block; }
.cut { width: 153px; border-left: 0; }
.range { width: 1217px; }
.slider { fill: #95969b; }
.slider text { fill: #a4a4a4; font-weight: 400; font-size: 22.8px; text-anchor: middle; }
.slider.big text { font-size: 24.6px; }
.slider text.now { fill: #222; }
.slider text.head { text-anchor: start; font-size: 22.3px; }
.track { stroke: #95969b; stroke-width: 9; }
.tick { stroke: #e0e0e0; stroke-width: 3; }

.weeks { width: 372px; height: 583px; margin-left: 70px; padding: 36px 0 0 42px; color: #211b97; font-size: 31.6px; line-height: 56.6px; }
.weeks li { height: 56.6px; width: 284px; padding-left: 17.5px; white-space: nowrap; }
.weeks .sel { height: 64.6px; margin-bottom: -8px; background: #039; color: #fff; font-weight: 600; line-height: 55.5px; }

.right { margin-left: 64px; width: 1271px; }
.dates { display: flex; align-items: center; height: 83px; font-size: 28.7px; }
.from { width: 88px; font-size: 27.3px; }
.to { width: 61px; margin-left: 42px; font-size: 27.3px; }
.select { display: flex; align-items: center; width: 292px; height: 83px; padding: 0 29px 0 25px; white-space: nowrap; }
.select .caret { margin-top: 2px; }
.select.year { width: 283px; margin-left: 133px; border-color: #039; }
.year .caret { border-top-color: #039; }
.chart { position: relative; height: 428px; margin: 72px 0 0 6px; padding-top: 46px; border-right: 0; }
.chart h2 { padding-left: 29px; font-weight: 600; font-size: 26.5px; line-height: 30px; color: #111; }
.chart svg { display: block; }
.grid, .mark { fill: none; stroke: #ddd; stroke-width: 2; }
.mark { stroke: #b0b0b0; }
.axis { fill: #b0b0b0; font: 400 18.1px "Liberation Sans", sans-serif; text-anchor: middle; }
.end { text-anchor: end; }
.ylab { font-size: 20px; }
.plot { fill: none; stroke-linejoin: round; }
.plot path { vector-effect: non-scaling-stroke; }
.band { stroke: #e8ecf0; stroke-width: 13; }
.base { stroke: #6b6b6b; stroke-width: 2.3; stroke-dasharray: 9 8; }
.upper { stroke: #f0a09c; stroke-width: 2.3; stroke-dasharray: 9 8; }
.obs { stroke: #1f489c; stroke-width: 3.3; }
.tip { position: absolute; left: 151px; top: 54px; width: 195px; height: 131px; display: flex; flex-direction: column; align-items: center; border: 3px solid #1f489c; background: #fff; color: #111; font-size: 22.2px; white-space: nowrap; }
.wk { line-height: 28px; margin-top: 10px; }
.what { line-height: 26px; margin-top: 3px; font-size: 20.2px; color: #666; }
.tip strong { line-height: 34px; margin-top: 9px; font-weight: 600; font-size: 29.6px; }
```
